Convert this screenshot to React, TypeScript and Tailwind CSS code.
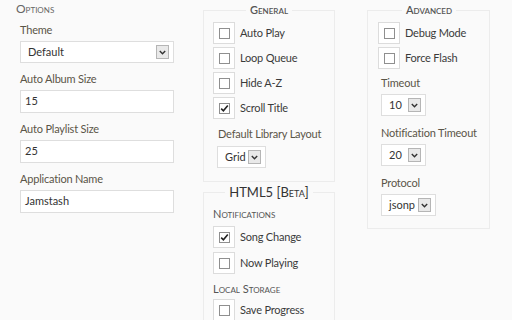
import React from "react";

const font = { fontFamily: "Lato, 'Open Sans', sans-serif" };

function Check({ label, checked = false }: { label: string; checked?: boolean }) {
  return (
    <div className="flex items-center gap-[5px]">
      <div className="w-[22px] h-[22px] bg-white border border-[#dcdcdc] flex items-center justify-center">
        <div className="w-[11px] h-[11px] bg-white border border-[#8f8f8f] flex items-center justify-center">
          {checked && (
            <svg width="9" height="9" viewBox="0 0 9 9">
              <path d="M1.2 4.6 L3.4 6.8 L7.8 1.6" fill="none" stroke="#222" strokeWidth="1.6" />
            </svg>
          )}
        </div>
      </div>
      <span className="whitespace-nowrap text-[11px] leading-[14px] tracking-[-0.2px] text-[#3a3a3a]">{label}</span>
    </div>
  );
}

function Select({ value, w }: { value: string; w: string }) {
  return (
    <div className={`${w} h-[22px] bg-white border border-[#dedede] flex items-center justify-between pl-[7px] pr-[4px]`}>
      <span className="text-[11px] text-[#333]">{value}</span>
      <div className="w-[13px] h-[14px] bg-[#e9e9e9] border border-[#b5b5b5] flex items-center justify-center">
        <svg width="7" height="5" viewBox="0 0 7 5">
          <path d="M0.8 1 L3.5 3.8 L6.2 1" fill="none" stroke="#333" strokeWidth="1.4" />
        </svg>
      </div>
    </div>
  );
}

function Field({ label, children }: { label: string; children: React.ReactNode }) {
  return (
    <div>
      <div className="whitespace-nowrap text-[11px] leading-[14px] tracking-[-0.2px] text-[#5a5548] mb-[4px]">{label}</div>
      {children}
    </div>
  );
}

function TextInput({ value }: { value: string }) {
  return (
    <div className="w-[154px] h-[23px] bg-white border border-[#dedede] flex items-center px-[4px] text-[11px] text-[#333]">
      {value}
    </div>
  );
}

export default function App() {
  return (
    <div className="w-[512px] h-[320px] overflow-hidden bg-[#fafafa] flex" style={font}>
      {/* Options */}
      <div className="w-[203px] pl-[16px] pt-[1px]">
        <div className="text-[12px] leading-[16px] text-[#666] [font-variant:small-caps]">Options</div>
        <div className="pl-[4px] mt-[6px] flex flex-col gap-[9px]">
          <Field label="Theme">
            <Select value="Default" w="w-[154px]" />
          </Field>
          <Field label="Auto Album Size">
            <TextInput value="15" />
          </Field>
          <Field label="Auto Playlist Size">
            <TextInput value="25" />
          </Field>
          <Field label="Application Name">
            <TextInput value="Jamstash" />
          </Field>
        </div>
      </div>

      {/* General + HTML5 */}
      <div className="w-[132px] pt-[3px] flex flex-col">
        <fieldset className="border border-[#ececec] px-[9px] pt-[5px] pb-[13px]">
          <legend className="mx-auto px-[4px] text-[11px] leading-[14px] text-[#555] [font-variant:small-caps] font-semibold">
            General
          </legend>
          <div className="flex flex-col gap-[3px]">
            <Check label="Auto Play" />
            <Check label="Loop Queue" />
            <Check label="Hide A-Z" />
            <Check label="Scroll Title" checked />
          </div>
          <div className="whitespace-nowrap pl-[5px] mt-[8px] text-[11px] leading-[14px] tracking-[-0.2px] text-[#5a5548]">
            Default Library Layout
          </div>
          <div className="pl-[4px] mt-[5px]">
            <Select value="Grid" w="w-[49px]" />
          </div>
        </fieldset>
        <fieldset className="mt-[2px] border border-[#ececec] px-[9px] pt-[7px] pb-[20px]">
          <legend className="mx-auto px-[4px] text-[13px] leading-[16px] text-[#333]">
            HTML5 [<span className="[font-variant:small-caps]">Beta</span>]
          </legend>
          <div className="text-[11px] leading-[14px] text-[#555] [font-variant:small-caps]">Notifications</div>
          <div className="mt-[5px] flex flex-col gap-[4px]">
            <Check label="Song Change" checked />
            <Check label="Now Playing" />
          </div>
          <div className="mt-[8px] text-[11px] leading-[14px] text-[#555] [font-variant:small-caps]">Local Storage</div>
          <div className="mt-[3px]">
            <Check label="Save Progress" />
          </div>
        </fieldset>
      </div>

      {/* Advanced */}
      <div className="ml-[32px] w-[123px] pt-[3px]">
        <fieldset className="border border-[#ececec] pl-[10px] pr-[9px] pt-[5px] pb-[12px]">
          <legend className="mx-auto px-[4px] text-[11px] leading-[14px] text-[#555] [font-variant:small-caps] font-semibold">
            Advanced
          </legend>
          <div className="flex flex-col gap-[3px]">
            <Check label="Debug Mode" />
            <Check label="Force Flash" />
          </div>
          <div className="pl-[3px] mt-[7px] flex flex-col gap-[10px]">
            <Field label="Timeout">
              <Select value="10" w="w-[45px]" />
            </Field>
            <Field label="Notification Timeout">
              <Select value="20" w="w-[45px]" />
            </Field>
            <Field label="Protocol">
              <Select value="jsonp" w="w-[55px]" />
            </Field>
          </div>
        </fieldset>
      </div>
    </div>
  );
}
